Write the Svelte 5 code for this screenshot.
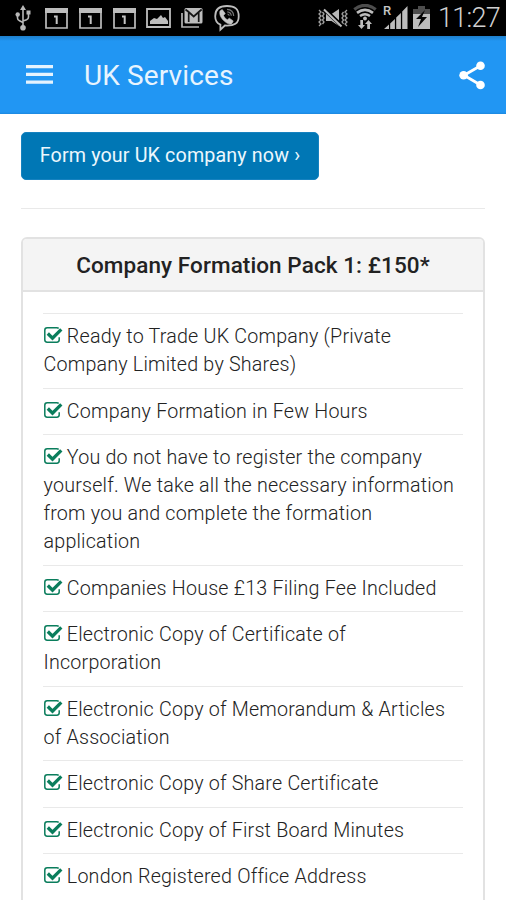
<script>
  const features = [
    'Ready to Trade UK Company (Private Company Limited by Shares)',
    'Company Formation in Few Hours',
    'You do not have to register the company yourself. We take all the necessary information from you and complete the formation application',
    'Companies House £13 Filing Fee Included',
    'Electronic Copy of Certificate of Incorporation',
    'Electronic Copy of Memorandum & Articles of Association',
    'Electronic Copy of Share Certificate',
    'Electronic Copy of First Board Minutes',
    'London Registered Office Address'
  ];
</script>

{#snippet calendar()}
  <svg class="calendar" width="23" height="21" viewBox="0 0 23 21" fill="none">
    <path d="M1 1h21v19H1z" stroke="#bdbdbd" stroke-width="1.7" />
    <path d="M0 0h23v5H0z" fill="#bdbdbd" />
    <path d="M9 8.400h2.700V16" stroke="#c4c4c4" stroke-width="2" />
  </svg>
{/snippet}

<div class="screen">
  <div class="status">
    <div class="left">
      <svg class="usb" width="16" height="27" viewBox="0 0 16 27" fill="none" stroke="#b8b8b8" stroke-width="1.6">
        <path d="M8 4v18M2.5 10v3q0 2 2 2.8L8 17.5M13.5 8v4q0 2-2 2.8L8 16" />
        <path d="M8 0l3 5H5z" fill="#b8b8b8" stroke="none" />
        <circle cx="8" cy="22.7" r="2.8" fill="#b8b8b8" stroke="none" />
        <circle cx="2.7" cy="9.5" r="2.2" fill="#b8b8b8" stroke="none" />
        <path d="M11.5 5.5h4v4h-4z" fill="#b8b8b8" stroke="none" />
      </svg>
      {@render calendar()}
      {@render calendar()}
      {@render calendar()}
      <svg class="photo" width="25" height="20" viewBox="0 0 25 20">
        <path d="M1 1h23v18H1z" fill="none" stroke="#bdbdbd" stroke-width="1.8" />
        <path d="M4 16v-3l4-3 3 1 4-4 2 3 2-1 3 4v3z" fill="#bdbdbd" />
      </svg>
      <svg class="mail" width="22" height="20" viewBox="0 0 22 20">
        <path d="M1 5v14h17" fill="none" stroke="#b3b3b3" stroke-width="1.7" />
        <rect x="3.5" y="0" width="18" height="15.5" rx="1.5" fill="#bdbdbd" />
        <path d="M7.7 14V4l5 4.5 5-4.5v10M4.5 1.500l3.200 2.500M20.700 1.500l-3 2.500" fill="none" stroke="#161616" stroke-width="1.7" />
      </svg>
      <svg class="viber" width="26" height="27" viewBox="0 0 26 27" fill="none" stroke="#bdbdbd">
        <path d="M13 1C5 1 1.2 4 1.2 11.2c0 4.5 1.6 7 5.2 8.500v5l4.500-4.200c9.600.5 13.800-2 13.800-9.300C24.700 4 21 1 13 1z" stroke-width="1.8" />
        <path d="M6 6l2.200-1.500 3 4-1.700 2c.8 2 2 3.300 4 4.200l1.800-1.500 3.900 2.700-1.200 2.500c-1.800 1.500-4.700.3-7.700-2.300C7.100 13.300 5 9.500 6 6z" fill="#c7c7c7" stroke="#c7c7c7" stroke-width=".6" />
        <path d="M13 4.300c4.500.2 6.500 2.300 6.700 6.700M13.300 6.800c2.500.2 3.800 1.500 4 4M13.500 9q1.500.2 1.700 1.800" stroke="#777" stroke-width="1.200" />
      </svg>
    </div>
    <div class="right">
      <svg class="mute" width="30" height="20" viewBox="0 0 30 20">
        <path d="M1 2l2 2-2 2 2 2-2 2 2 2-2 2 2 2-2 2M4.500 4l1.500 2-1.500 2L6 10l-1.500 2L6 14l-1.500 2M29 2l-2 2 2 2-2 2 2 2-2 2 2 2-2 2 2 2M25.500 4L24 6l1.500 2-1.500 2 1.500 2-1.500 2 1.500 2" fill="none" stroke="#a0a0a0" stroke-width="1.300" />
        <path d="M8 6h5.500L21 1v17l-7.500-5H8z" fill="#b8b8b8" />
        <path d="M6 1l18 17" stroke="#000" stroke-width="4" />
        <path d="M6 1.500l17.500 17" stroke="#bbb" stroke-width="2" />
      </svg>
      <svg class="wifi" width="24" height="26" viewBox="0 0 24 26" fill="none">
        <path d="M1.300 5.500Q12-2.800 22.700 5.500" stroke="#4d4d4d" stroke-width="3.200" />
        <path d="M4 8.800q8-5.800 16 0" stroke="#bdbdbd" stroke-width="2.800" />
        <path d="M7 12q5-3.500 10 0" stroke="#bdbdbd" stroke-width="2.500" />
        <circle cx="12" cy="14.500" r="1.900" fill="#bdbdbd" />
        <path d="M7.300 16h2.700v5H12l-3.500 4L5 21h2.300zM14.200 25H17v-5h2l-3.500-4-3.500 4h2.200z" fill="#bdbdbd" />
      </svg>
      <div class="signal">
        <span>R</span>
        <svg width="24" height="24" viewBox="0 0 24 24" fill="#bdbdbd">
          <path d="M0 24l5-4.500V24zM6.200 24v-5.500l4.700-4.500v10zM12.200 24V12.500l4.700-4.500v16zM18.200 24V6.500L23.500 1v23z" />
        </svg>
      </div>
      <svg class="battery" width="17" height="23" viewBox="0 0 17 23">
        <path d="M5 0h7v3h5v6H0V3h5z" fill="#4d4d4d" />
        <path d="M0 8h17v15H0z" fill="#bdbdbd" />
        <path d="M12 4L3 13h5l-3 8 9-10H9z" fill="#050505" />
      </svg>
      <span class="clock">11:27</span>
    </div>
  </div>

  <header>
    <svg class="menu" width="27" height="20" viewBox="0 0 27 20" fill="#e5f3fe">
      <path d="M0 0h27v3.300H0zM0 7.800h27v3.300H0zM0 15.500h27v3.300H0z" />
    </svg>
    <h1>UK Services</h1>
    <svg class="share" width="27" height="29" viewBox="0 0 27 29">
      <path d="M21.500 4.700L5 14.300l16.500 9.700" fill="none" stroke="#fff" stroke-width="2.800" />
      <g fill="#fff"><circle cx="21.500" cy="4.700" r="4.300" /><circle cx="4.600" cy="14.300" r="4.300" /><circle cx="21.500" cy="24" r="4.300" /></g>
    </svg>
  </header>

  <main>
    <button>Form your UK company now ›</button>
    <hr />
    <section>
      <h2>Company Formation Pack 1: £150*</h2>
      <ul>
        {#each features as feature}
          <li>
            <svg class="check" width="19" height="16" viewBox="0 0 19 16" fill="none" stroke="#0a7d5c">
              <path d="M14.700 1.300Q14 .8 12.800.8H3.200Q.8.8.8 3.200v9.600q0 2.400 2.400 2.400h9.600q2.400 0 2.400-2.400V10.200" stroke-width="1.500" />
              <path d="M3.800 6.500l4.700 4.600L17.300 2.300" stroke-width="3.300" />
            </svg>{feature}
          </li>
        {/each}
      </ul>
    </section>
  </main>
</div>

<style>
  :global(body) { margin: 0; background: #fff; }
  .screen { width: 506px; height: 900px; overflow: hidden; background: #fff; font-family: Roboto, sans-serif; color: #222; }
  .status { height: 36px; box-sizing: border-box; background: #000; display: flex; justify-content: space-between; padding: 0 6px 0 15px; }
  .left, .right { display: flex; align-items: flex-start; }
  svg { display: block; flex: none; }
  .usb { margin-top: 5px; margin-right: 14px; }
  .calendar { margin-top: 8px; margin-right: 11px; }
  .photo { margin-top: 8px; margin-left: -1px; }
  .mail { margin: 8px 0 0 10px; }
  .viber { margin: 5px 0 0 11px; }
  .mute { margin-top: 8px; }
  .wifi { margin: 4px 0 0 5px; }
  .signal { position: relative; margin: 5px 0 0 7px; }
  .signal span { position: absolute; left: -1px; top: -1px; font-size: 13px; line-height: 14px; font-weight: 500; color: #c6c6c6; }
  .battery { margin: 6px 0 0 5px; }
  .clock { width: 62px; margin-left: 8px; font-size: 27px; line-height: 36px; letter-spacing: -.7px; color: #d0d0d0; font-weight: 300; white-space: nowrap; }
  header { height: 78px; display: flex; align-items: center; box-sizing: border-box; padding: 0 20px 0 26px; background: linear-gradient(#1e7fcb, #2196f3 5px, #2196f3 76px, #1b88df 78px); }
  h1 { margin: 2px 0 0 31px; font-size: 28px; line-height: 36px; letter-spacing: .12px; font-weight: 400; color: #e8f4fe; flex: 1; }
  main { padding: 18px 21px 0; }
  button { display: block; width: 298px; height: 48px; padding: 0 0 1px; border: 1px solid #1682c0; border-radius: 5px; background: #0077b5; color: #edf7fd; font: 400 19.700px/28px Roboto, sans-serif; letter-spacing: .14px; white-space: nowrap; }
  hr { height: 1px; margin: 28px 0; border: 0; background: #e9e9e9; }
  section { height: 700px; border: 2px solid #e2e2e2; border-radius: 6px; box-sizing: border-box; }
  h2 { margin: 0; height: 53px; box-sizing: border-box; border-bottom: 2px solid #e2e2e2; border-radius: 4px 4px 0 0; background: #f4f4f4; text-align: center; font-size: 22.500px; line-height: 52px; letter-spacing: .08px; font-weight: 500; }
  ul { margin: 21px 20px 0; padding: 0; list-style: none; }
  li { border-top: 1px solid #e9e9e9; padding: 9px 0 8.400px .5px; font-size: 19.700px; line-height: 28.100px; font-weight: 300; letter-spacing: .2px; }
  .check { display: inline-block; margin-right: 4.300px; vertical-align: 0; }
</style>
